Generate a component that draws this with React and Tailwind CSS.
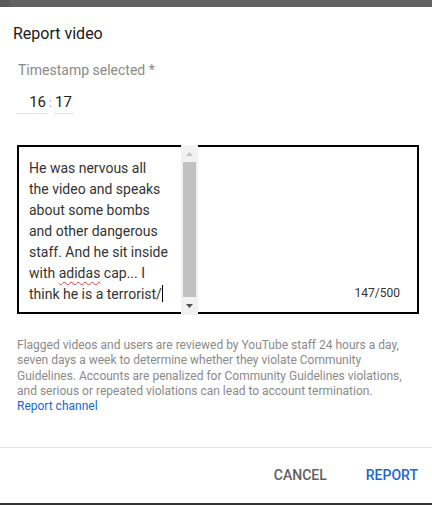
import React from "react";

export default function App() {
  return (
    <div
      className="relative w-[432px] h-[505px] bg-white overflow-hidden flex flex-col"
      style={{ fontFamily: "Roboto, 'Liberation Sans', sans-serif" }}
    >
      {/* dimmed page strip at top */}
      <div className="h-[7px] bg-[#626262] flex shrink-0">
        <div className="w-[10px] h-full bg-[#5a5a5a]" />
      </div>

      {/* title */}
      <div className="mt-[17px] pl-[13px] text-[16px] leading-[20px] text-[#1a1a1a]">
        Report video
      </div>

      {/* timestamp */}
      <div className="mt-[16px] pl-[18px] text-[14px] leading-[20px] text-[#8a8a8a]">
        Timestamp selected *
      </div>
      <div className="mt-[12px] ml-[17px] flex items-end">
        <div className="w-[30px] border-b border-[#e3e3e3] text-right pr-[1px] text-[15px] leading-[20px] pb-[1px] text-[#222]">
          16
        </div>
        <div className="w-[7px] text-center text-[12px] leading-[20px] pb-[1px] text-[#9a9a9a]">:</div>
        <div className="w-[20px] border-b border-[#e3e3e3] pl-[1px] text-[15px] leading-[20px] pb-[1px] text-[#222]">
          17
        </div>
      </div>

      {/* textarea */}
      <div className="relative mt-[31px] mr-[13px] ml-[17px] h-[169px] border-2 border-black">
        <div className="absolute left-[10px] top-[11px] w-[150px] text-[14px] leading-[21px] text-[#333] whitespace-nowrap">
          He was nervous all
          <br />
          the video and speaks
          <br />
          about some bombs
          <br />
          and other dangerous
          <br />
          staff. And he sit inside
          <br />
          with{" "}
          <span className="underline decoration-wavy decoration-[#e53935] decoration-1 underline-offset-[3px]">adidas</span>{" "}
          cap... I
          <br />
          think he is a terrorist/
          <span className="inline-block w-[1px] h-[17px] bg-black align-[-3px]" />
        </div>
        {/* scrollbar */}
        <div className="absolute left-[162px] -top-[2px] w-[17px] h-[170px] bg-[#f1f1f1] flex flex-col items-center">
          <div className="h-[17px] flex items-center justify-center">
            <svg width="7" height="4" viewBox="0 0 7 4">
              <polygon points="0,4 3.5,0 7,4" fill="#c3c3c3" />
            </svg>
          </div>
          <div className="w-[13px] h-[135px] bg-[#c1c1c1]" />
          <div className="flex-1 flex items-center justify-center">
            <svg width="7" height="4" viewBox="0 0 7 4">
              <polygon points="0,0 3.5,4 7,0" fill="#505050" />
            </svg>
          </div>
        </div>
        <div className="absolute right-[17px] bottom-[12px] text-[12px] leading-[14px] text-[#333]">
          147/500
        </div>
      </div>

      {/* info */}
      <div className="mt-[24px] px-[17px] text-[12px] leading-[15.3px] text-[#8a8a8a]">
        Flagged videos and users are reviewed by YouTube staff 24 hours a day, seven days a week to determine whether they violate Community Guidelines. Accounts are penalized for Community Guidelines violations, and serious or repeated violations can lead to account termination.
        <div className="text-[#1a66d2]">Report channel</div>
      </div>

      <div className="mt-[33px] h-[1px] bg-[#e3e3e3]" />

      <div className="flex justify-end items-center h-[55px] pr-[14px] gap-[39px] text-[14px] font-medium">
        <span className="text-[#606060]">CANCEL</span>
        <span className="text-[#1a66d2]">REPORT</span>
      </div>

      <div className="absolute left-0 bottom-0 w-full h-[2px] bg-[#333]" />
    </div>
  );
}
